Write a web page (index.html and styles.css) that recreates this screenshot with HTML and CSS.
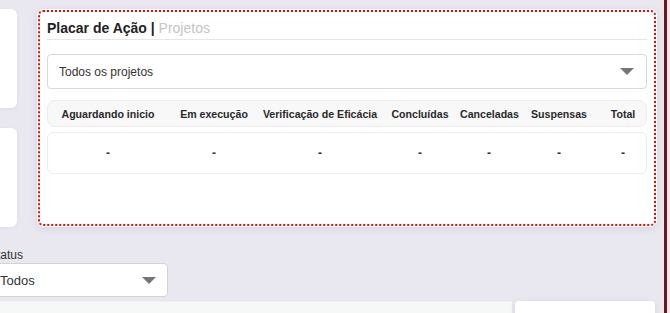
FILE: index.html
```html
<!DOCTYPE html>
<html lang="pt-BR">
<head>
  <meta charset="UTF-8" />
  <meta name="viewport" content="width=device-width, initial-scale=1.0" />
  <title>Placar de Ação</title>
  <link rel="stylesheet" href="styles.css">
</head>
<body>
  <div class="page">
    <div class="top">
      <div class="side">
        <div class="mini-card"></div>
        <div class="mini-card"></div>
      </div>

      <div class="card board">
        <h2 class="board-title">Placar de Ação <span class="sep">|</span> <span class="sub">Projetos</span></h2>

        <div class="select wide">
          <span>Todos os projetos</span>
          <span class="caret"></span>
        </div>

        <div class="score-head">
          <div>Aguardando inicio</div>
          <div>Em execução</div>
          <div>Verificação de Eficácia</div>
          <div>Concluídas</div>
          <div>Canceladas</div>
          <div>Suspensas</div>
          <div>Total</div>
        </div>
        <div class="score-row">
          <div>-</div>
          <div>-</div>
          <div>-</div>
          <div>-</div>
          <div>-</div>
          <div>-</div>
          <div>-</div>
        </div>
      </div>
    </div>

    <div class="filter">
      <label class="filter-label">Status</label>
      <div class="select small">
        <span>Todos</span>
        <span class="caret"></span>
      </div>
    </div>

    <div class="bottom">
      <div class="list-panel">
        <span>Ação</span>
        <span>Título</span>
        <span>Responsável</span>
        <span>Prazo</span>
        <span>Término</span>
        <span>Status</span>
        <span>Eficácia</span>
      </div>
      <div class="card side-panel"></div>
    </div>
  </div>
</body>
</html>
```

FILE: styles.css
```css
body {
  margin: 0;
  background-color: #e9e8f1;
  font-family: "Liberation Sans", Arial, sans-serif;
  color: #333;
  overflow: hidden;
}

.page {
  width: 667px;
  height: 313px;
  box-sizing: border-box;
  border-right: 3px solid #6d1518;
  padding-top: 9px;
  overflow: hidden;
}

.top {
  display: flex;
  gap: 20px;
  margin-left: -183px;
}

.side {
  width: 200px;
  display: flex;
  flex-direction: column;
  gap: 20px;
}

.mini-card {
  height: 99px;
  background: #fff;
  border-radius: 6px;
  box-shadow: 0 1px 4px rgba(0, 0, 0, 0.05);
}

.card {
  background: #fff;
  border-radius: 6px;
  box-shadow: 0 2px 8px rgba(0, 0, 0, 0.08);
}

.board {
  width: 620px;
  height: 218px;
  box-sizing: border-box;
  padding: 9px 10px;
  outline: 2px dotted #f00;
  outline-offset: -3px;
}

.board-title {
  margin: 0;
  font-size: 14px;
  line-height: 21px;
  font-weight: bold;
  color: #222;
  border-bottom: 1px solid #e6e6e6;
}

.board-title .sub {
  font-weight: normal;
  color: #c4c4c4;
}

.select {
  display: flex;
  align-items: center;
  justify-content: space-between;
  background: #fff;
  border: 1px solid #d9d9d9;
  border-radius: 4px;
  box-sizing: border-box;
  color: #333;
}

.select.wide {
  margin-top: 14px;
  height: 35px;
  padding: 0 12px 0 11px;
  font-size: 12px;
}

.caret {
  width: 0;
  height: 0;
  border-left: 7px solid transparent;
  border-right: 7px solid transparent;
  border-top: 7px solid #767676;
}

.score-head,
.score-row {
  display: grid;
  grid-template-columns: 120px 92px 120px 80px 58px 82px 46px;
  box-sizing: border-box;
  border: 1px solid #ededed;
  font-size: 10.6px;
  font-weight: bold;
  text-align: center;
  white-space: nowrap;
  align-items: center;
}

.score-head {
  margin-top: 11px;
  height: 27px;
  background: #f8f8f8;
  border-radius: 8px;
  color: #2a2a2a;
}

.score-row {
  margin-top: 5px;
  height: 42px;
  background: #fff;
  border-radius: 6px;
  font-size: 12px;
  color: #333;
}

.filter {
  margin-top: 21px;
  margin-left: -14px;
}

.filter-label {
  display: block;
  margin-left: 3px;
  font-size: 12px;
  line-height: 14px;
  color: #333;
}

.select.small {
  margin-top: 1px;
  width: 182px;
  height: 34px;
  padding: 0 11px 0 13px;
  font-size: 13px;
  border-color: #d3d3d3;
}

.bottom {
  display: flex;
  margin-top: 4px;
  gap: 3px;
  margin-left: -20px;
}

.list-panel {
  width: 532px;
  height: 30px;
  background: #f6f8f8;
  border-top: 1px solid #eef0f0;
  display: flex;
  gap: 34px;
  padding: 10px 0 0 34px;
  box-sizing: border-box;
  font-size: 12px;
  color: #666;
  white-space: nowrap;
  overflow: hidden;
}

.side-panel {
  width: 140px;
  height: 30px;
  border-radius: 4px 4px 0 0;
}
```
